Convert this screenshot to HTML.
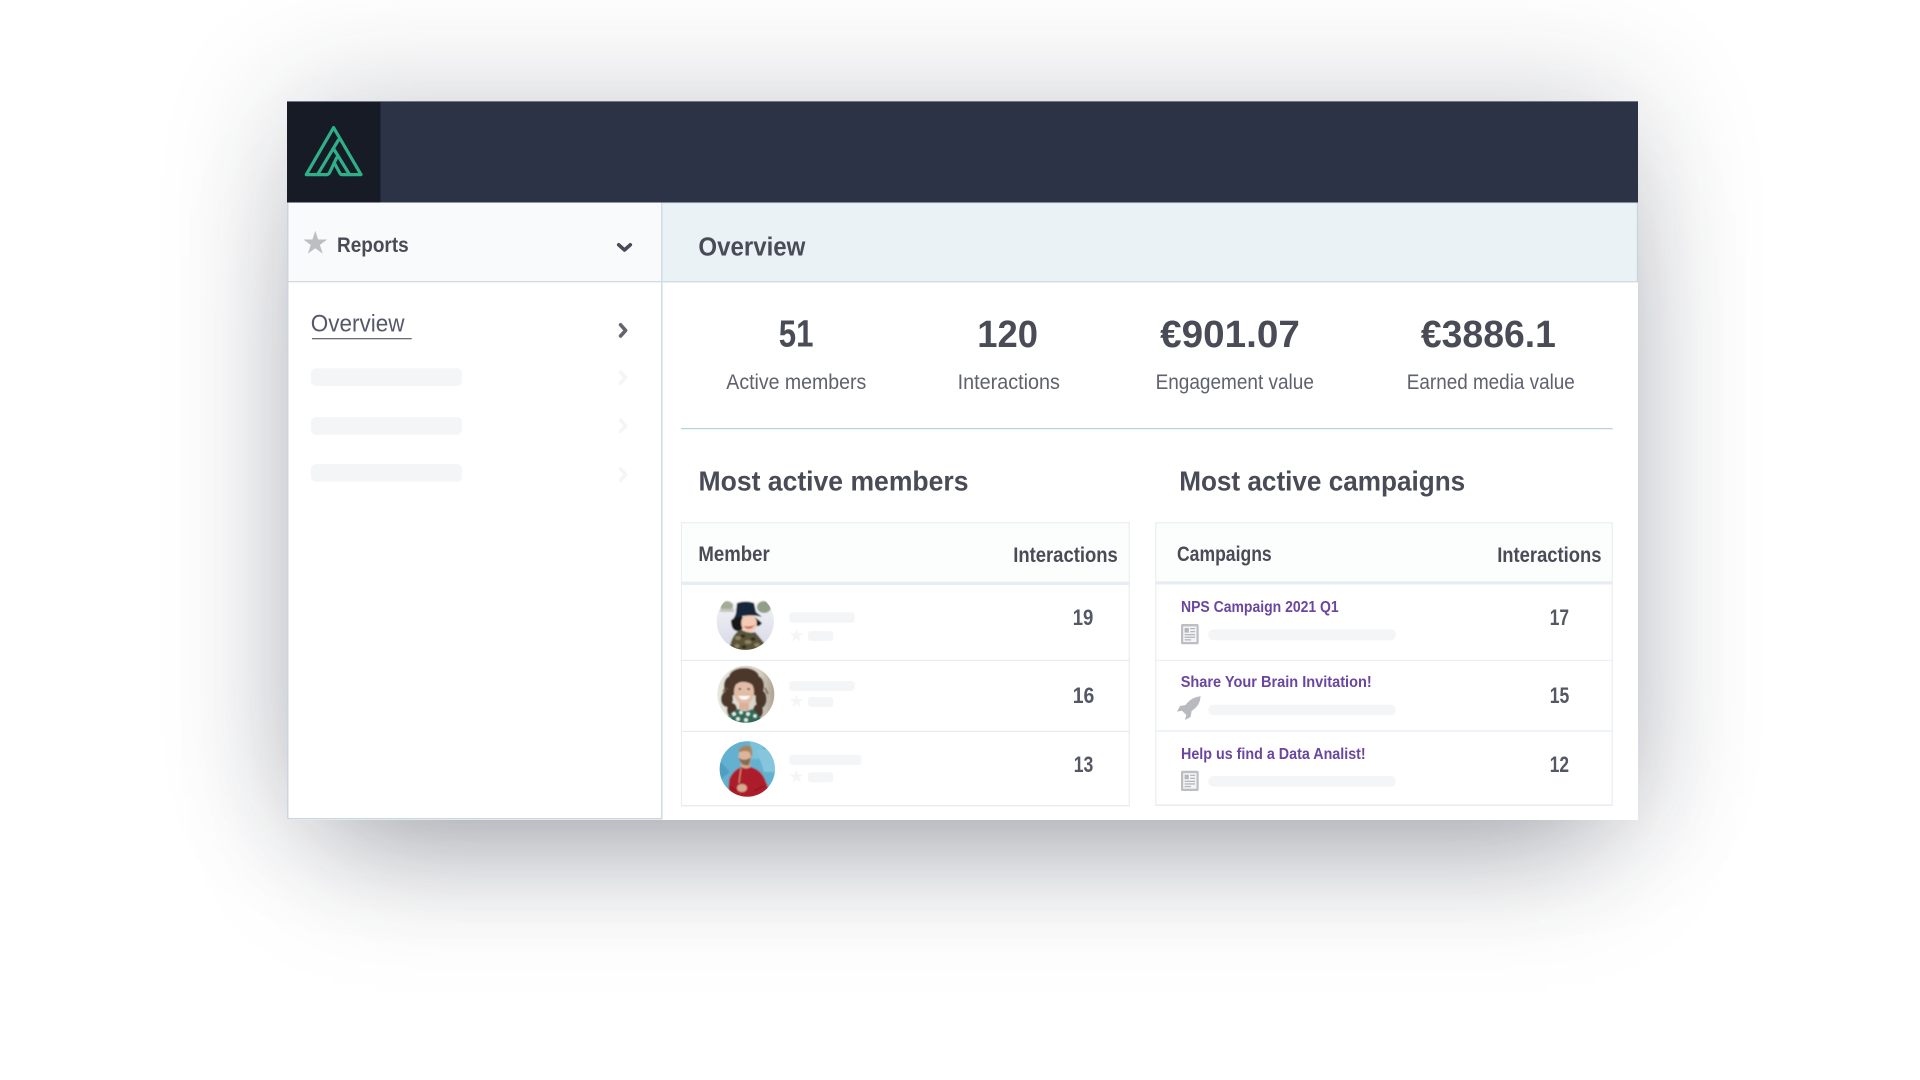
<!DOCTYPE html>
<html lang="en"><head><meta charset="utf-8"><title>Overview</title>
<style>
html,body{margin:0;padding:0;width:1920px;height:1080px;overflow:hidden;background:#fff}
#win{position:absolute;left:287px;top:101.5px;width:1351px;height:718px;background:#fff;box-shadow:0 -6px 120px rgba(30,35,54,.2),0 65px 125px -45px rgba(30,35,54,.36)}
svg{position:absolute;left:0;top:0}
text{font-family:"Liberation Sans",sans-serif;fill:#494c57}
.b{font-weight:700}
.l{fill:#5f626e}
.n{font-weight:700;font-size:22px;fill:#555864}
.p{font-weight:700;font-size:15.5px;fill:#6b46a0}
</style></head><body>
<div id="win"></div>
<svg width="1920" height="1080" viewBox="0 0 1920 1080" xmlns="http://www.w3.org/2000/svg">
<defs>
<polygon id="st" points="0,-1 .2245,-.309 .951,-.309 .363,.118 .588,.809 0,.382 -.588,.809 -.363,.118 -.951,-.309 -.2245,-.309"/>
<clipPath id="c1"><circle cx="745.3" cy="621.3" r="28.6"/></clipPath>
<clipPath id="c2"><circle cx="745.8" cy="694.3" r="28.5"/></clipPath>
<clipPath id="c3"><circle cx="747.3" cy="769" r="27.7"/></clipPath>
<linearGradient id="g2" x1="0" x2="1" y1="0" y2="0"><stop offset="0" stop-color="#e8e8e0"/><stop offset=".7" stop-color="#d8d4c8"/><stop offset="1" stop-color="#a89a88"/></linearGradient>
<linearGradient id="g1" x1="0" x2="0" y1="0" y2="1"><stop offset="0" stop-color="#ffffff"/><stop offset=".16" stop-color="#ffffff"/><stop offset=".3" stop-color="#eeeef4"/><stop offset="1" stop-color="#d6d7e6"/></linearGradient>
<filter id="bl" x="-10%" y="-10%" width="120%" height="120%"><feGaussianBlur stdDeviation=".7"/></filter>
<g id="doc"><rect x="0" y="0" width="17.7" height="20.3" rx="1.5" fill="#bcbec2"/><rect x="2.2" y="2.4" width="13.3" height="15.6" fill="#f3f4f5"/><rect x="3.6" y="4" width="4.2" height="4.6" fill="#b4b6bb"/><rect x="9.2" y="4" width="4.9" height="1.3" fill="#b4b6bb"/><rect x="9.2" y="7" width="4.9" height="1.3" fill="#b4b6bb"/><rect x="3.6" y="10" width="10.5" height="1.3" fill="#b4b6bb"/><rect x="3.6" y="12.6" width="10.5" height="1.3" fill="#b4b6bb"/><rect x="3.6" y="15.2" width="6.5" height="1.3" fill="#b4b6bb"/></g>
</defs>

<!-- header -->
<rect x="287" y="101" width="1351" height="1.2" fill="#737784"/>
<rect x="287" y="102" width="1351" height="100.5" fill="#2d3347"/>
<rect x="287" y="102" width="93.5" height="100.5" fill="#161b26"/>
<g fill="none" stroke="#2fb088" stroke-width="3.2" stroke-linejoin="round" stroke-linecap="round">
<path d="M326.5 174.6 L306.3 174.6 L333.6 127.6 L361 174.6 L342 174.6 Q340.6 174.6 339.8 173 L334.2 162.6"/>
<path d="M336.6 157.8 L329.6 172.6 Q328.6 174.6 326.5 174.6"/>
<path d="M317.6 174.6 L338.4 140"/>
<path d="M333.4 148.4 L349.6 174.6"/>
</g>

<!-- sidebar -->
<rect x="287.6" y="202.5" width="374" height="79" fill="#f9fafb"/>
<rect x="287" y="281" width="375" height="1.3" fill="#d5dae0"/>
<rect x="287" y="202.5" width="1.5" height="617" fill="#c9d6e0"/>
<rect x="661" y="202.5" width="1.6" height="617" fill="#d0dde6"/>
<rect x="287" y="818" width="375" height="1.5" fill="#c9d6e0"/>
<use href="#st" transform="translate(315.3 243.4) scale(12.6)" fill="#bdbec2"/>
<text class="b" x="337" y="252" font-size="21" textLength="71.7" lengthAdjust="spacingAndGlyphs">Reports</text>
<path d="M618.7 244.8 L624.5 250 L630.3 244.8" fill="none" stroke="#494c57" stroke-width="3.6" stroke-linecap="round" stroke-linejoin="round"/>
<text x="310.8" y="331.7" font-size="24" textLength="93.7" lengthAdjust="spacingAndGlyphs" style="fill:#55586a">Overview</text>
<rect x="312" y="338" width="99.7" height="1.3" fill="#6a6c76"/>
<path d="M620.6 324.8 L625.6 330.4 L620.6 336" fill="none" stroke="#62646f" stroke-width="3.6" stroke-linecap="round" stroke-linejoin="round"/>
<g fill="#f4f5f7">
<rect x="311" y="368.3" width="151" height="17.7" rx="5"/>
<rect x="311" y="417" width="151" height="17.7" rx="5"/>
<rect x="311" y="464" width="151" height="17.7" rx="5"/>
</g>
<g fill="none" stroke="#f4f5f6" stroke-width="3.6" stroke-linecap="round" stroke-linejoin="round">
<path d="M620.6 372 L625.6 377.5 L620.6 383"/>
<path d="M620.6 420 L625.6 425.8 L620.6 431.5"/>
<path d="M620.6 469 L625.6 474.6 L620.6 480"/>
</g>

<!-- overview head -->
<rect x="662.6" y="202.5" width="975" height="79" fill="#ebf2f6"/>
<rect x="662.6" y="281" width="975.4" height="1.4" fill="#cbdce5"/>
<rect x="662.6" y="202.5" width="975.4" height="1.2" fill="#dde9ef"/>
<rect x="1636.8" y="202.5" width="1.2" height="79" fill="#c5d6df"/>
<text class="b" x="698.4" y="255.7" font-size="25.5" textLength="107" lengthAdjust="spacingAndGlyphs">Overview</text>

<!-- stats -->
<g class="b" font-size="38">
<text class="b" x="778.8" y="346.7" textLength="34.7" lengthAdjust="spacingAndGlyphs">51</text>
<text class="b" x="977.3" y="347" textLength="60.7" lengthAdjust="spacingAndGlyphs">120</text>
<text class="b" x="1160.2" y="347.2" textLength="139.7" lengthAdjust="spacingAndGlyphs">€901.07</text>
<text class="b" x="1420.9" y="347.2" textLength="135" lengthAdjust="spacingAndGlyphs">€3886.1</text>
</g>
<g font-size="21">
<text class="l" x="726.3" y="389" textLength="140" lengthAdjust="spacingAndGlyphs">Active members</text>
<text class="l" x="957.6" y="389" textLength="102.3" lengthAdjust="spacingAndGlyphs">Interactions</text>
<text class="l" x="1155.6" y="389" textLength="158.3" lengthAdjust="spacingAndGlyphs">Engagement value</text>
<text class="l" x="1406.8" y="389" textLength="168" lengthAdjust="spacingAndGlyphs">Earned media value</text>
</g>
<rect x="681" y="428" width="931.7" height="1.2" fill="#b5d2dd"/>

<text class="b" x="698.5" y="490.4" font-size="28" textLength="270" lengthAdjust="spacingAndGlyphs">Most active members</text>
<text class="b" x="1179.2" y="490.4" font-size="28" textLength="286" lengthAdjust="spacingAndGlyphs">Most active campaigns</text>

<!-- table 1 -->
<rect x="681.5" y="522.8" width="447.7" height="283" fill="#fff" stroke="#e8eef2" stroke-width="1.2"/>
<rect x="682" y="523.4" width="446.6" height="58.6" fill="#fcfdfd"/>
<rect x="681" y="581.7" width="448.7" height="3.2" fill="#e6edf2"/>
<rect x="681" y="659.8" width="448.7" height="1.2" fill="#e8ebf0"/>
<rect x="681" y="730.8" width="448.7" height="1.2" fill="#e8ebf0"/>
<rect x="681" y="805" width="448.7" height="1.4" fill="#e6edf2"/>
<text class="b" x="698.4" y="561" font-size="21" textLength="71.3" lengthAdjust="spacingAndGlyphs">Member</text>
<text class="b" x="1013.2" y="562" font-size="21" textLength="104.6" lengthAdjust="spacingAndGlyphs">Interactions</text>

<!-- avatar 1 -->
<g clip-path="url(#c1)"><g filter="url(#bl)">
<rect x="715" y="590" width="62" height="62" fill="url(#g1)"/>
<ellipse cx="726.7" cy="606" rx="6.5" ry="5" fill="#a3ad96"/>
<rect x="720" y="609" width="14" height="3" fill="#c2c8bc"/>
<ellipse cx="764" cy="607" rx="7" ry="6" fill="#8f9f88"/>
<path d="M731 620 Q731 633 741 631 L746 622 L741 615 Z" fill="#171717"/>
<path d="M755 617 L762 623 Q759 628 755 625 Z" fill="#171717"/>
<ellipse cx="749" cy="623" rx="7.8" ry="9" fill="#f1cbb3"/>
<path d="M743.5 626 Q749 632 755 625 Q750 627.5 743.5 626Z" fill="#d0564a"/>
<path d="M737 603 Q746 600 754 603 L756 612 L762 617 Q748 613 733 619 Q736 615 736 612 Z" fill="#15273b"/>
<path d="M729 652 Q731 634 741 629.5 Q749 634 755 632 Q762 640 771 652 Z" fill="#5a5239"/>
<g fill="#8d8262"><ellipse cx="738" cy="638" rx="3" ry="2"/><ellipse cx="748" cy="642" rx="3.5" ry="2"/><ellipse cx="757" cy="645" rx="3" ry="2"/><ellipse cx="737" cy="646" rx="2.5" ry="2"/></g>
<g fill="#2f2a20"><ellipse cx="743" cy="636" rx="2.5" ry="1.6"/><ellipse cx="753" cy="639" rx="2.5" ry="1.6"/><ellipse cx="744" cy="647" rx="2.5" ry="1.6"/></g>
</g></g>
<!-- avatar 2 -->
<g clip-path="url(#c2)"><g filter="url(#bl)">
<rect x="715" y="664" width="62" height="62" fill="url(#g2)"/>
<g fill="#4c372b">
<ellipse cx="744" cy="677" rx="15" ry="9"/>
<ellipse cx="731" cy="686" rx="7" ry="10"/>
<ellipse cx="757" cy="686" rx="7" ry="10"/>
<ellipse cx="727" cy="699" rx="6" ry="8"/>
<ellipse cx="761" cy="699" rx="5.5" ry="9"/>
<ellipse cx="732" cy="710" rx="5" ry="7"/>
<ellipse cx="758" cy="711" rx="5" ry="7"/>
</g>
<path d="M723 692 Q726 686 728 690 M765 688 L768 694" stroke="#6e5240" stroke-width="1.5" fill="none"/>
<ellipse cx="744" cy="692" rx="10" ry="13" fill="#e2bca6"/>
<path d="M734.5 686 Q737 678 745 678 Q751 678 754 686 Q748 681 741 682 Q737 683 734.5 686Z" fill="#4c372b"/>
<path d="M738 696 Q744 703.5 750.5 696 Z" fill="#fff"/>
<g fill="#3a2a22"><ellipse cx="739.8" cy="689" rx="1.4" ry=".9"/><ellipse cx="748.6" cy="689" rx="1.4" ry=".9"/></g>
<rect x="739" y="703" width="10" height="7" fill="#d9b19a"/>
<path d="M724 726 Q727 713 738 709 Q745 713 752 709 Q760 714 764 726 Z" fill="#2f6a58"/>
<g fill="#eaf1ea"><circle cx="734" cy="714" r="1.9"/><circle cx="741" cy="712.5" r="1.7"/><circle cx="748" cy="714" r="1.9"/><circle cx="755" cy="716" r="1.7"/><circle cx="738" cy="719" r="1.9"/><circle cx="746" cy="720" r="1.9"/><circle cx="729" cy="719" r="1.7"/></g>
</g></g>
<!-- avatar 3 -->
<g clip-path="url(#c3)"><g filter="url(#bl)">
<rect x="718" y="740" width="60" height="60" fill="#62b1d0"/>
<rect x="750" y="741" width="13" height="18" fill="#7cc2da"/>
<path d="M757 750 L764 772 L776 772 L776 748Z" fill="#85c6dc"/>
<path d="M719 760 L730 772 L720 780Z" fill="#4f9fc0"/>
<rect x="741" y="762" width="9" height="7" fill="#cfa78c"/>
<ellipse cx="745" cy="756" rx="6.3" ry="8.5" fill="#dcb59a"/>
<path d="M738 751 Q742 744 750 746 Q753 748 752 758 L749.500 752 Q744 750 740 752Z" fill="#a6845f"/>
<path d="M739 759 Q742 767 749 765 L751 757 Q745 762 739 758Z" fill="#8a6a50"/>
<path d="M728 800 L729 780 Q732 771 741 767 Q746 770 751 767 Q762 770 766 782 L770 792 L768 800 Z" fill="#ad1a2a"/>
<path d="M741 768 L739 783" stroke="#d8b48f" stroke-width=".8" fill="none"/>
<ellipse cx="742" cy="788" rx="5" ry="4" fill="#d7aa90"/>
<path d="M729 786 L736 791 M754 791 L764 786" stroke="#8c121d" stroke-width="1.4" fill="none"/>
</g></g>

<!-- member placeholders -->
<g fill="#f4f5f7">
<rect x="789.3" y="612.3" width="65.4" height="10.4" rx="3"/><rect x="808" y="631" width="25.3" height="10" rx="3"/>
<rect x="789.3" y="681" width="65.4" height="10" rx="3"/><rect x="808" y="697" width="25.3" height="10" rx="3"/>
<rect x="789.3" y="754.7" width="72" height="10.3" rx="3"/><rect x="808" y="772.3" width="25.3" height="10" rx="3"/>
<use href="#st" transform="translate(796.5 635.6) scale(7.2)"/>
<use href="#st" transform="translate(796.5 701.4) scale(7.2)"/>
<use href="#st" transform="translate(796.5 776.9) scale(7.2)"/>
</g>
<text class="n" x="1072.7" y="625" textLength="20.6" lengthAdjust="spacingAndGlyphs">19</text>
<text class="n" x="1072.7" y="703" textLength="21.6" lengthAdjust="spacingAndGlyphs">16</text>
<text class="n" x="1073.7" y="772" textLength="19.6" lengthAdjust="spacingAndGlyphs">13</text>

<!-- table 2 -->
<rect x="1155.8" y="522.8" width="456.4" height="282.4" fill="#fff" stroke="#e8eef2" stroke-width="1.2"/>
<rect x="1156.4" y="523.4" width="455.2" height="58" fill="#fcfdfd"/>
<rect x="1155.3" y="581.3" width="457.4" height="3.2" fill="#e6edf2"/>
<rect x="1155.3" y="659.8" width="457.4" height="1.2" fill="#edf1f5"/>
<rect x="1155.3" y="730.2" width="457.4" height="1.8" fill="#edf2f6"/>
<rect x="1155.3" y="804.4" width="457.4" height="1.4" fill="#e6edf2"/>
<text class="b" x="1177" y="561" font-size="21" textLength="94.7" lengthAdjust="spacingAndGlyphs">Campaigns</text>
<text class="b" x="1497.2" y="562" font-size="21" textLength="104.3" lengthAdjust="spacingAndGlyphs">Interactions</text>
<text class="p" x="1181" y="612" textLength="157.7" lengthAdjust="spacingAndGlyphs">NPS Campaign 2021 Q1</text>
<text class="p" x="1180.7" y="687" textLength="191" lengthAdjust="spacingAndGlyphs">Share Your Brain Invitation!</text>
<text class="p" x="1181" y="759" textLength="184.7" lengthAdjust="spacingAndGlyphs">Help us find a Data Analist!</text>
<use href="#doc" x="1181" y="624"/>
<use href="#doc" x="1181" y="770.7"/>
<path d="M1200.6 696.3 C1194 697 1189.3 700 1185.6 705 L1180 706 L1177 711.6 L1182 710.8 L1186.3 715 L1185 720 L1190.6 717 L1191.6 711 C1197 707.6 1200.2 703 1200.6 696.3Z" fill="#b9babf"/>
<g fill="#f4f5f7">
<rect x="1208.3" y="629.3" width="187.4" height="11" rx="5"/>
<rect x="1208.3" y="704.7" width="187.4" height="10.6" rx="5"/>
<rect x="1208.3" y="776" width="187.4" height="10.7" rx="5"/>
</g>
<text class="n" x="1549.7" y="625" textLength="19.3" lengthAdjust="spacingAndGlyphs">17</text>
<text class="n" x="1549.7" y="703" textLength="19.6" lengthAdjust="spacingAndGlyphs">15</text>
<text class="n" x="1549.7" y="772" textLength="19.3" lengthAdjust="spacingAndGlyphs">12</text>
</svg>
</body></html>
